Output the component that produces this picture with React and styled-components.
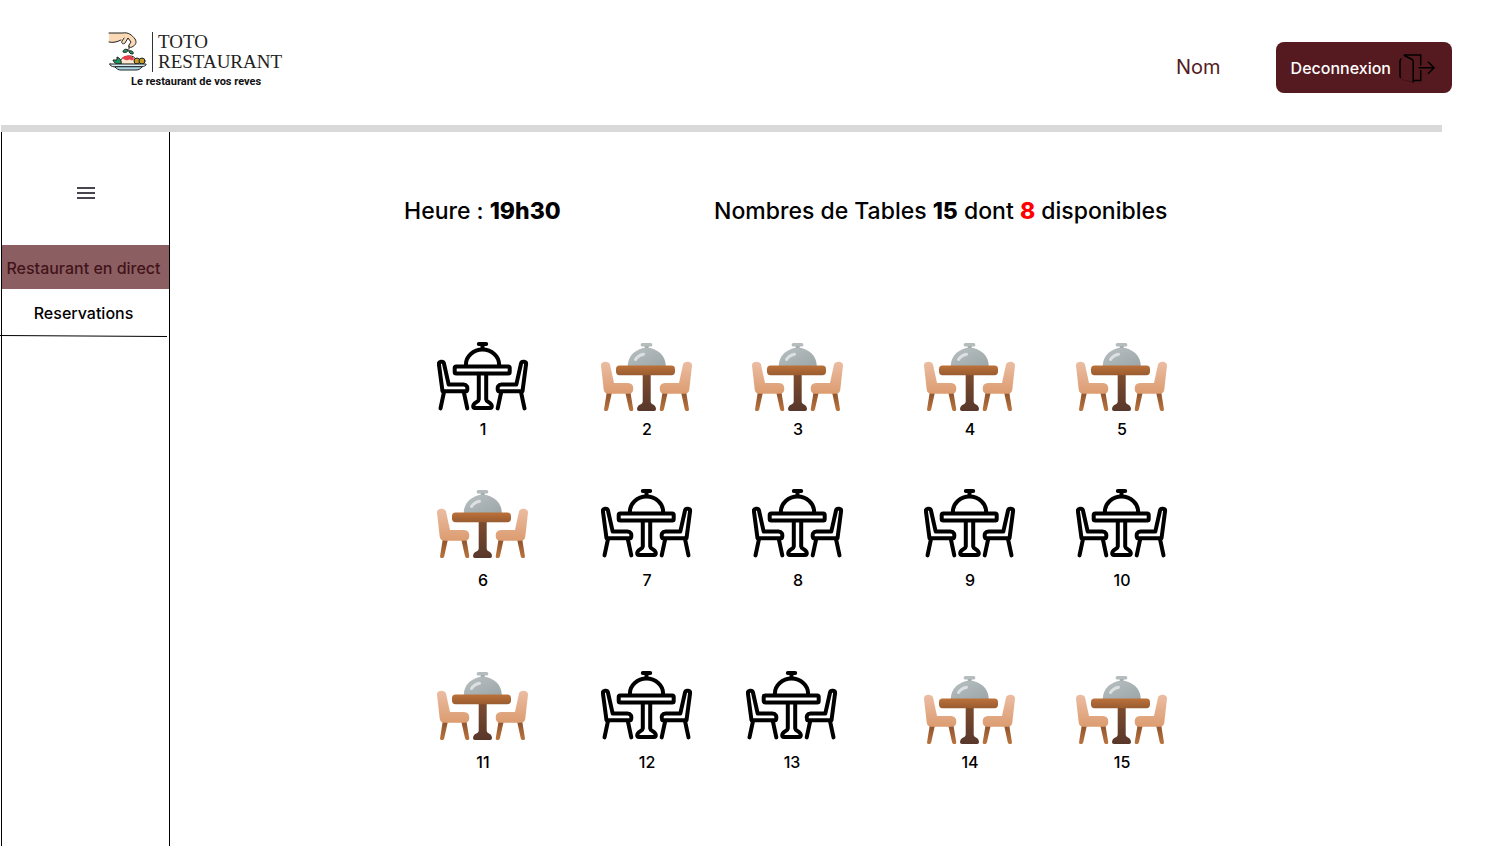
import React from "react";
import styled, { createGlobalStyle } from "styled-components";

const GlobalStyle = createGlobalStyle`
  * { box-sizing: border-box; }
  body {
    margin: 0;
    background: #fff;
    color: #000;
    font-family: Inter, "Liberation Sans", sans-serif;
    font-size: 16px;
    line-height: 20px;
  }
`;

const Page = styled.div`
  min-height: 100vh;
  display: flex;
  flex-direction: column;
`;

const Header = styled.header`
  display: flex;
  align-items: flex-start;
  padding: 28px 33px 0 108px;
  min-height: 125px;
`;

const Brand = styled.a`
  display: grid;
  grid-template-columns: 44px 1fr;
  color: #222;
  text-decoration: none;
  margin-right: auto;
`;

const BrandName = styled.span`
  display: flex;
  flex-direction: column;
  height: 40px;
  margin-top: 4px;
  padding-left: 5px;
  border-left: 1px solid #333;
  font-family: "Liberation Serif", serif;
  font-size: 19px;
  line-height: 20px;
`;

const Tagline = styled.span`
  grid-column: 1 / -1;
  padding-left: 23px;
  color: #111;
  font-family: Roboto, sans-serif;
  font-size: 11px;
  font-weight: 700;
  line-height: 20px;
`;

const Account = styled.div`
  display: flex;
  align-items: center;
  gap: 55px;
  margin-top: 14px;
`;

const UserName = styled.span`
  color: #541a1f;
  font-size: 20px;
  line-height: 24px;
  padding-bottom: 2px;
`;

const LogoutButton = styled.button`
  display: flex;
  align-items: center;
  gap: 7px;
  height: 51px;
  padding: 0 16px 0 15px;
  border: 0;
  border-radius: 8px;
  background: #541a1f;
  color: #fff;
  font: inherit;
  font-weight: 500;
  cursor: pointer;
`;

const Divider = styled.div`
  height: 7px;
  margin: 0 43px 0 1px;
  background: #d9d9d9;
`;

const Body = styled.div`
  display: flex;
  flex: 1;
`;

const Sidebar = styled.nav`
  flex: 0 0 169px;
  margin-left: 1px;
  border: solid #000;
  border-width: 0 1px;
`;

const MenuButton = styled.button`
  display: block;
  margin: 49px auto 40px;
  padding: 0;
  height: 24px;
  border: 0;
  background: none;
  cursor: pointer;
`;

const NavLink = styled.a`
  display: flex;
  align-items: center;
  justify-content: center;
  height: ${(p) => (p.$active ? 44 : 46)}px;
  padding: 2px 4px 0 0;
  background: ${(p) => (p.$active ? "#8b5f62" : "transparent")};
  color: ${(p) => (p.$active ? "#43131a" : "#000")};
  font-weight: 500;
  text-decoration: none;
  white-space: nowrap;
`;

const NavRule = styled.svg`
  display: block;
  width: 168px;
  height: 3px;
  margin-left: -2px;
`;

const Main = styled.main`
  flex: 1;
  padding: 64px 0 40px;
`;

const Summary = styled.div`
  display: grid;
  grid-template-columns: 234fr 310fr 771fr;
  font-size: 23px;
  font-weight: 500;
  line-height: 30px;
  margin-bottom: 115px;

  p { margin: 0; white-space: nowrap; }
  p:first-child { grid-column: 2; }
  strong { font-weight: 800; }
`;

const Available = styled.strong`
  color: #f00;
`;

const TableRow = styled.div`
  display: grid;
  grid-template-columns: ${(p) => p.$columns};
  align-items: end;
  margin-bottom: ${(p) => p.$after}px;

  > :first-child { grid-column: 2; }
`;

const TableButton = styled.button`
  display: flex;
  flex-direction: column;
  align-items: center;
  gap: ${(p) => (p.$tight ? 8 : 12)}px;
  width: 92px;
  padding: 0;
  border: 0;
  background: none;
  color: #000;
  font: inherit;
  font-weight: 500;
  cursor: pointer;
`;

function LogoArt() {
  return (
    <svg width="42" height="44" viewBox="0 0 42 44" fill="none" stroke="#222" strokeWidth="1" strokeLinejoin="round" strokeLinecap="round" aria-hidden="true">
      <path d="M1 5H15C20 4 24 7 27 11C29 14 28 17 24 19C22 20 20 19 21 17L23 15L20 11L17 15C15 17 13 15 14 13L16 9L11 13C8 15 4 14 1 14" fill="#fbd9b5" stroke="none" />
      <path d="M1 5H15C20 4 24 7 27 11C29 14 28 17 24 19C22 20 20 19 21 17L23 14L20 10L17 15C15 17 13 15 14 13L16 10M1 14C5 15 9 14 13 12" />
      <path d="M21 18V21" />
      <path d="M20 22C17 20 15 22 15 24C18 25 20 24 20 22ZM21 23C24 22 26 24 25 26C22 26 21 25 21 23Z" fill="#1d9a62" />
      <path d="M12 36C11 31 16 28 22 28C27 28 29 32 29 36Z" fill="#fbe6cf" />
      <path d="M14 30C17 26 25 27 26 31C24 34 22 30 20 32C18 33 16 31 14 30Z" fill="#e83e4c" stroke="none" />
      <path d="M13 36C10 36 6 36 5 32L9 32L9 29C12 30 14 33 13 36Z" fill="#1d9a62" />
      <circle cx="29" cy="33" r="3" fill="#c79b2c" />
      <circle cx="34" cy="33" r="3" fill="#c79b2c" />
      <path d="M2 36H38C39 38 34 39 31 39H9C5 39 1 38 2 36Z" fill="#d8edf5" />
      <path d="M7 39C9 41 10 42 13 42H28C31 42 32 41 34 39Z" fill="#a9d5e5" />
    </svg>
  );
}

function ExitIcon() {
  return (
    <svg width="38" height="30" viewBox="0 0 38 30" fill="none" stroke="#000" strokeWidth="1.5" aria-hidden="true">
      <path d="M6 2H22.7V12.5M22.7 17V27.5H16" />
      <path d="M5.7 2.3L13.8 6.2L15.2 8V29.5" />
      <path d="M3.2 5.5Q2 7 2 9V22Q2 24 2.8 25" />
      <path d="M4 26.5L14 29" strokeWidth="0.5" opacity="0.5" />
      <path d="M20.5 14.7H36M30 8.7L36 14.7L30 20.7" />
    </svg>
  );
}

function ChairOutline() {
  return (
    <>
      <path d="M1.9 23C1.6 20.5 6.2 19.8 6.9 22.3L11.7 43.6H26.5C29.5 43.6 31.3 46 29.8 50.2H5.5Z" />
      <path d="M7 51L3.5 67.4M26.8 51L30.3 67.4" />
    </>
  );
}

function FreeTableIcon() {
  return (
    <svg width="92" height="70" viewBox="0 0 92 70" fill="none" stroke="#000" strokeWidth="4" strokeLinecap="round" strokeLinejoin="round" aria-hidden="true">
      <path d="M41.8 2.9H49.2M45.5 3V8" />
      <path d="M28.9 24V23.5A16.6 15 0 0 1 62.1 23.5V24" />
      <rect x="17.7" y="25.4" width="55" height="7" rx="1.5" />
      <path d="M41.8 34V58.5C41.8 61 36.2 61.5 36.2 65.3Q36.2 67 38 67H53Q54.8 67 54.8 65.3C54.8 61.5 49.2 61 49.2 58.5V34" />
      <ChairOutline />
      <g transform="translate(91 0) scale(-1 1)">
        <ChairOutline />
      </g>
    </svg>
  );
}

function ChairSolid({ id }) {
  return (
    <>
      <path d="M5.8 51H11L7.2 68.6Q6.7 70.2 4.9 70.2Q2.7 70 3.1 68ZM24.2 51H29.4L32.2 68Q32.5 70 30.4 70.2Q28.6 70.2 28.1 68.6Z" fill={`url(#${id}-leg)`} />
      <path d="M0 24.5C-0.3 19.8 8 19.5 9 23.5L13 42H27Q32.3 42.3 32.3 47.5Q32.3 52.8 27.5 52.8H7.5Q3.4 52.8 2.7 48.5Z" fill={`url(#${id}-seat)`} />
    </>
  );
}

function BusyTableIcon({ id }) {
  return (
    <svg width="92" height="70" viewBox="0 0 92 70" aria-hidden="true">
      <defs>
        <linearGradient id={`${id}-seat`} x1="0" y1="0" x2="0" y2="1">
          <stop offset="0" stopColor="#ebbda3" />
          <stop offset="1" stopColor="#dc9c70" />
        </linearGradient>
        <linearGradient id={`${id}-leg`} x1="0" y1="0" x2="0" y2="1">
          <stop offset="0" stopColor="#8d512c" />
          <stop offset="1" stopColor="#ba753e" />
        </linearGradient>
        <linearGradient id={`${id}-top`} x1="0" y1="0" x2="0" y2="1">
          <stop offset="0" stopColor="#bb713b" />
          <stop offset="1" stopColor="#995c30" />
        </linearGradient>
        <linearGradient id={`${id}-post`} x1="0" y1="0" x2="0" y2="1">
          <stop offset="0" stopColor="#7d4c2e" />
          <stop offset="1" stopColor="#58372b" />
        </linearGradient>
        <linearGradient id={`${id}-dome`} x1="0" y1="0" x2="1" y2="1">
          <stop offset="0" stopColor="#b8c0c2" />
          <stop offset="1" stopColor="#9ca5a7" />
        </linearGradient>
      </defs>
      <rect x="39.7" y="2" width="11.6" height="3.6" rx="1.6" fill="#b5bcbe" />
      <path d="M43.7 5H47.7V9H43.7Z" fill="#a5adaf" />
      <path d="M26.7 25A19 18.2 0 0 1 64.8 25Z" fill={`url(#${id}-dome)`} />
      <path d="M34.5 18.5C36 15.8 38.5 14 42.5 13.2" fill="none" stroke="#dce0e1" strokeWidth="3" strokeLinecap="round" />
      <path d="M41.7 33H49.7V61Q50 62.5 52 63.5Q55 65 55 68.3Q55 70 53.2 70H38Q36 70 36 68.3Q36 65 39.3 63.5Q41.4 62.5 41.7 61Z" fill={`url(#${id}-post)`} />
      <rect x="15" y="24.6" width="59" height="9.6" rx="3.6" fill={`url(#${id}-top)`} />
      <ChairSolid id={id} />
      <g transform="translate(91 0) scale(-1 1)">
        <ChairSolid id={id} />
      </g>
    </svg>
  );
}

const regularColumns = "267fr 164fr 151fr 172fr 152fr 409fr";
const lastRowColumns = "267fr 164fr 145fr 178fr 152fr 409fr";

const rows = [
  { columns: regularColumns, after: 49, tables: [[1, true, true], [2, false, true], [3, false, true], [4, false, true], [5, false, true]] },
  { columns: regularColumns, after: 80, tables: [[6, false], [7, true], [8, true], [9, true], [10, true]] },
  { columns: lastRowColumns, after: 0, tables: [[11, false], [12, true], [13, true], [14, false, true], [15, false, true]] },
];

export default function App() {
  return (
    <Page>
      <GlobalStyle />
      <Header>
        <Brand href="#accueil">
          <LogoArt />
          <BrandName>
            <span>TOTO</span>
            <span>RESTAURANT</span>
          </BrandName>
          <Tagline>Le restaurant de vos reves</Tagline>
        </Brand>
        <Account>
          <UserName>Nom</UserName>
          <LogoutButton type="button">
            Deconnexion
            <ExitIcon />
          </LogoutButton>
        </Account>
      </Header>
      <Divider />
      <Body>
        <Sidebar>
          <MenuButton type="button" aria-label="Menu">
            <svg width="24" height="24" viewBox="0 0 24 24" stroke="#49454f" strokeWidth="2" aria-hidden="true">
              <path d="M3 7H21M3 12H21M3 17H21" />
            </svg>
          </MenuButton>
          <NavLink href="#direct" $active aria-current="page">Restaurant en direct</NavLink>
          <NavLink href="#reservations">Reservations</NavLink>
          <NavRule viewBox="0 0 168 3" aria-hidden="true">
            <path d="M0 0.5L167 1.5" stroke="#000" />
          </NavRule>
        </Sidebar>
        <Main>
          <Summary>
            <p>Heure : <strong>19h30</strong></p>
            <p>Nombres de Tables <strong>15</strong> dont <Available>8</Available> disponibles</p>
          </Summary>
          {rows.map((row) => (
            <TableRow key={row.tables[0][0]} $columns={row.columns} $after={row.after}>
              {row.tables.map(([number, free, tight]) => (
                <TableButton key={number} type="button" $tight={tight}>
                  {free ? <FreeTableIcon /> : <BusyTableIcon id={`table${number}`} />}
                  {number}
                </TableButton>
              ))}
            </TableRow>
          ))}
        </Main>
      </Body>
    </Page>
  );
}
